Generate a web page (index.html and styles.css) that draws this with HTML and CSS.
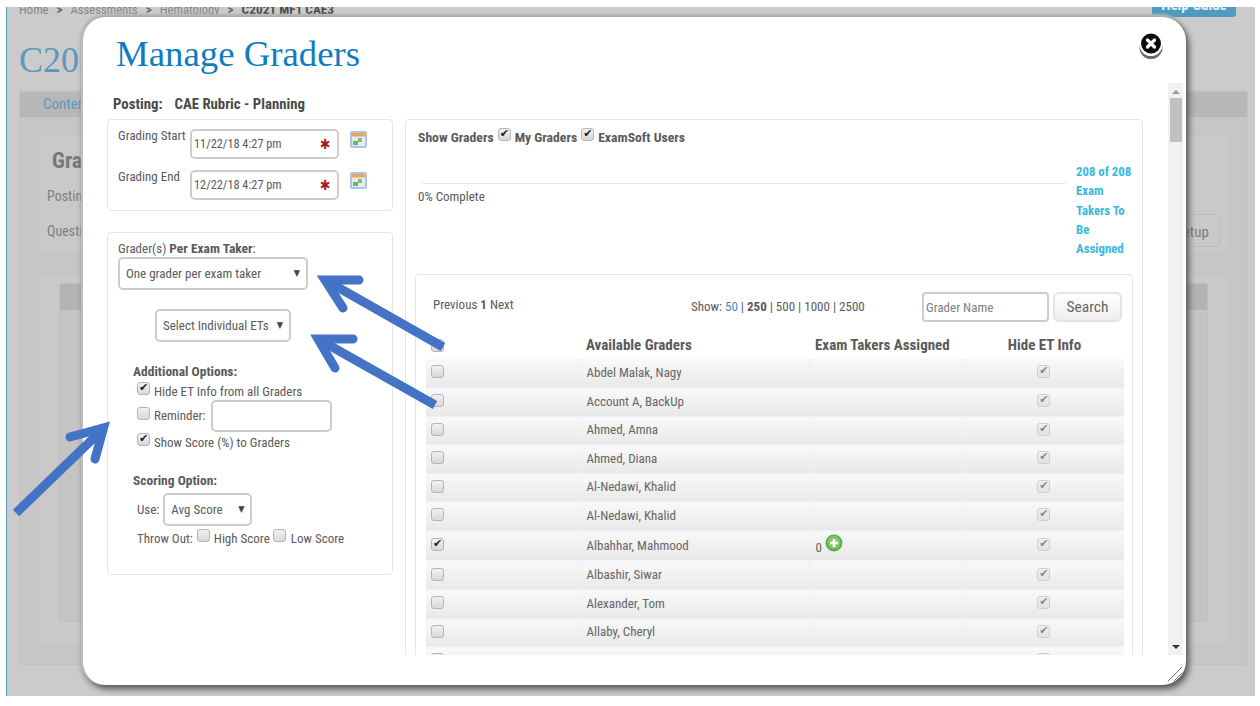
FILE: index.html
```html
<!DOCTYPE html>
<html lang="en">
<head>
<meta charset="utf-8">
<title>Manage Graders</title>
<link rel="stylesheet" href="styles.css">
</head>
<body>
<div class="page">
  <div class="crumbs"><span>Home</span><b class="sep">&gt;</b><span>Assessments</span><b class="sep">&gt;</b><span>Hematology</span><b class="sep">&gt;</b><b>C2021 MF1 CAE3</b><a class="help">Help Guide</a></div>
  <div class="page-title">C2021 MF1 CAE3</div>
  <div class="tabs">
    <div class="tabs-head"><a>Content</a></div>
    <div class="bg-card top">
      <div class="bg-h">Grading</div>
      <div class="bg-line">Posting</div>
      <div class="bg-line q">Questions<span class="bg-btn">Setup</span></div>
    </div>
    <div class="bg-card lower">
      <div class="bg-inner"><div class="bg-strip"></div></div>
    </div>
  </div>
</div>

<div class="modal">
  <h1>Manage Graders</h1>
  <a class="close" aria-label="Close">
    <svg width="28" height="32" viewBox="0 0 28 32"><ellipse cx="14" cy="17.5" rx="11.5" ry="11.5" fill="#444" opacity=".8"/><ellipse cx="14" cy="14.5" rx="11.5" ry="11.5" fill="#fff"/><circle cx="14" cy="13.5" r="10" fill="#0b0b0b"/><path d="M10.5 10l7 7M17.5 10l-7 7" stroke="#fff" stroke-width="3.2" stroke-linecap="round"/></svg>
  </a>
  <div class="scroll-wrap">
    <div class="content">
      <div class="posting"><b>Posting:</b><b>CAE Rubric - Planning</b></div>
      <div class="columns">
        <div class="left">
          <section class="card dates">
            <div class="date-row">
              <label>Grading Start</label>
              <div class="date-input"><span>11/22/18 4:27 pm</span><i class="req">✱</i></div>
              <svg class="cal" width="17" height="17" viewBox="0 0 17 17"><rect x="1" y="1" width="15" height="15" rx="1" fill="#e3edf8" stroke="#a9c6e8" stroke-width="2"/><rect x="2" y="2" width="13" height="3.5" fill="#f2a25c"/><rect x="3" y="10" width="5" height="4" fill="#6fb468"/><rect x="8" y="7" width="4" height="4" fill="#7fc070"/></svg>
            </div>
            <div class="date-row">
              <label>Grading End</label>
              <div class="date-input"><span>12/22/18 4:27 pm</span><i class="req">✱</i></div>
              <svg class="cal" width="17" height="17" viewBox="0 0 17 17"><rect x="1" y="1" width="15" height="15" rx="1" fill="#e3edf8" stroke="#a9c6e8" stroke-width="2"/><rect x="2" y="2" width="13" height="3.5" fill="#f2a25c"/><rect x="3" y="10" width="5" height="4" fill="#6fb468"/><rect x="8" y="7" width="4" height="4" fill="#7fc070"/></svg>
            </div>
          </section>
          <section class="card options">
            <div class="per-label">Grader(s) <b>Per Exam Taker</b>:</div>
            <div class="select s1"><span>One grader per exam taker</span><i>▼</i></div>
            <div class="select s2"><span>Select Individual ETs</span><i>▼</i></div>
            <div class="opt-title">Additional Options:</div>
            <label class="opt o1"><input type="checkbox" checked>Hide ET Info from all Graders</label>
            <label class="opt o2"><input type="checkbox">Reminder:<input type="text" class="reminder"></label>
            <label class="opt o3"><input type="checkbox" checked>Show Score (%) to Graders</label>
            <div class="opt-title scoring">Scoring Option:</div>
            <div class="use">Use:<div class="select s3"><span>Avg Score</span><i>▼</i></div></div>
            <div class="throw">Throw Out:<input type="checkbox"><span>High Score</span><input type="checkbox"><span>Low Score</span></div>
          </section>
        </div>
        <section class="card right">
          <div class="show"><b>Show Graders</b><input type="checkbox" checked><b>My Graders</b><input type="checkbox" checked><b>ExamSoft Users</b></div>
          <div class="progress-row">
            <div class="progress-col">
              <div class="bar"></div>
              <div class="pct">0% Complete</div>
            </div>
            <div class="remaining">208 of 208<br>Exam<br>Takers To<br>Be<br>Assigned</div>
          </div>
          <div class="list-card">
            <div class="toolbar">
              <div class="pager">Previous <b>1</b> Next</div>
              <div class="sizes">Show: <a>50</a> | <b>250</b> | 500 | 1000 | 2500</div>
              <input class="search" type="text" placeholder="Grader Name">
              <button class="search-btn" type="button">Search</button>
            </div>
            <table>
              <thead>
                <tr><th class="c1"><input type="checkbox"></th><th class="c2">Available Graders</th><th class="c3">Exam Takers Assigned</th><th class="c4">Hide ET Info</th></tr>
              </thead>
              <tbody>
                <tr><td><input type="checkbox"></td><td>Abdel Malak, Nagy</td><td></td><td class="h"><input type="checkbox" checked disabled></td></tr>
                <tr><td><input type="checkbox"></td><td>Account A, BackUp</td><td></td><td class="h"><input type="checkbox" checked disabled></td></tr>
                <tr><td><input type="checkbox"></td><td>Ahmed, Amna</td><td></td><td class="h"><input type="checkbox" checked disabled></td></tr>
                <tr><td><input type="checkbox"></td><td>Ahmed, Diana</td><td></td><td class="h"><input type="checkbox" checked disabled></td></tr>
                <tr><td><input type="checkbox"></td><td>Al-Nedawi, Khalid</td><td></td><td class="h"><input type="checkbox" checked disabled></td></tr>
                <tr><td><input type="checkbox"></td><td>Al-Nedawi, Khalid</td><td></td><td class="h"><input type="checkbox" checked disabled></td></tr>
                <tr class="tall"><td><input type="checkbox" checked></td><td>Albahhar, Mahmood</td><td><span class="zero">0</span><svg class="plus" width="18" height="18" viewBox="0 0 18 18"><circle cx="9" cy="9" r="8.5" fill="#5bb04a"/><circle cx="9" cy="8.5" r="6.5" fill="#82c96e"/><path d="M9 5v8M5 9h8" stroke="#fff" stroke-width="2.6"/></svg></td><td class="h"><input type="checkbox" checked disabled></td></tr>
                <tr><td><input type="checkbox"></td><td>Albashir, Siwar</td><td></td><td class="h"><input type="checkbox" checked disabled></td></tr>
                <tr><td><input type="checkbox"></td><td>Alexander, Tom</td><td></td><td class="h"><input type="checkbox" checked disabled></td></tr>
                <tr><td><input type="checkbox"></td><td>Allaby, Cheryl</td><td></td><td class="h"><input type="checkbox" checked disabled></td></tr>
                <tr><td><input type="checkbox"></td><td></td><td></td><td class="h"><input type="checkbox" checked disabled></td></tr>
              </tbody>
            </table>
          </div>
        </section>
      </div>
    </div>
    <div class="scrollbar"><i class="up"></i><div class="thumb"></div><i class="down"></i></div>
  </div>
  <svg class="grip" width="16" height="16" viewBox="0 0 16 16"><path d="M1 15L15 1M7 15L15 7" stroke="#777" stroke-width="1"/></svg>
</div>

<svg class="arrows" width="1260" height="706" viewBox="0 0 1260 706" fill="none" stroke="#4472c4" stroke-width="9">
  <path d="M443 347L325 280"/><path d="M359 280H325L343 308" stroke-linecap="round"/>
  <path d="M435 405L318 339"/><path d="M353 339H318L335 368" stroke-linecap="round"/>
  <path d="M16 513L103 429"/><path d="M70 437L103.5 428L95 459" stroke-linecap="round"/>
</svg>
</body>
</html>
```

FILE: styles.css
```css
* { box-sizing: border-box; }
html, body { margin: 0; height: 706px; overflow: hidden; background: #fff; }
body {
  padding: 7px 5px 10px 6px;
  font-family: Roboto, "Liberation Sans", Arial, sans-serif;
  font-size: 13px;
  font-stretch: 75%;
  line-height: 1.2;
  color: #5a5a5a;
}
b { font-weight: 700; }
i { font-style: normal; }

input[type=checkbox] {
  appearance: none;
  -webkit-appearance: none;
  flex: none;
  width: 13px;
  height: 13px;
  margin: 0;
  border: 1px solid #b5b5b5;
  border-radius: 3px;
  background: linear-gradient(#f2f2f2, #d8d8d8);
  position: relative;
  vertical-align: middle;
}
input[type=checkbox]:checked::after {
  content: "✔";
  position: absolute;
  left: 1px;
  top: -2px;
  font: 11px/14px "DejaVu Sans", sans-serif;
  color: #222;
}
input[type=checkbox]:disabled { border-color: #d0d0d0; background: linear-gradient(#f0f0f0, #e2e2e2); }
input[type=checkbox]:disabled::after { color: #8a8a8a; }

/* dimmed page behind the dialog */
.page {
  height: 689px;
  overflow: hidden;
  background: #cbcbcb;
  border-left: 1px solid #5b9cba;
  padding: 0 7px 0 12px;
  color: #7d7d7d;
}
.crumbs { display: flex; align-items: center; gap: 8px; height: 11px; font-size: 12.6px; color: #868686; white-space: nowrap; margin-top: -3px; position: relative; }
.crumbs b { color: #4b4b4b; font-size: 13.3px; }
.crumbs .sep { color: #6a6a6a; }
.help { margin-left: auto; margin-right: 12px; width: 84px; height: 17px; background: #4d9cc0; color: #dfeef5; font-weight: 700; font-size: 15px; text-align: center; border-radius: 0 0 3px 3px; line-height: 11px; margin-top: -2px; }
.page-title { font: 36px/40px "Liberation Serif", serif; color: #5c98bd; margin-top: 25px; height: 50px; white-space: nowrap; }
.tabs { height: 575px; background: #c6c6c6; border: 1px solid #c2c2c2; border-radius: 3px; padding: 0 18px 18px; display: flex; flex-direction: column; }
.tabs-head { height: 25px; margin: 1px -18px 0; background: #b7b7b7; padding: 3px 23px; color: #5c98bd; font-size: 15px; }
.bg-card { background: #c9c9c9; border: 1px solid #c3c3c3; border-radius: 3px; }
.top { height: 118px; margin-top: 18px; padding: 12px 8px; position: relative; }
.bg-h { font-size: 22px; font-weight: 700; color: #787878; padding-left: 5px; }
.bg-line { margin-top: 14px; font-size: 14px; }
.bg-line.q { margin-top: 18px; }
.bg-btn { position: absolute; right: 8px; top: 78px; width: 60px; height: 33px; border: 1px solid #bdbdbd; border-radius: 4px; text-align: right; padding: 8px 14px; font-size: 15px; }
.lower { flex: 1; margin-top: 22px; padding: 7px 20px 23px 20px; display: flex; }
.bg-inner { flex: 1; background: #c4c4c4; border: 1px solid #bfbfbf; border-radius: 3px; }
.bg-strip { height: 26px; background: #b3b3b3; }

/* dialog */
.modal {
  position: absolute;
  left: 81px;
  top: 17px;
  width: 1105px;
  height: 668px;
  background: #fff;
  border-radius: 24px;
  border-left: 2px solid #bdbdbd;
  box-shadow: 3px 4px 6px #555, 0 -3px 2px #b5b5b5;
  display: flex;
  flex-direction: column;
}
h1 { margin: 0; height: 66px; padding: 17px 0 0 33px; font: 400 36.8px/40px "Liberation Serif", serif; color: #0f7cc0; }
.close { position: absolute; right: 21px; top: 13px; line-height: 0; }
.scroll-wrap { height: 572px; display: flex; margin-right: 2px; overflow: hidden; }
.content { flex: 1; min-width: 0; padding: 0 24px 0 24px; }
.posting { display: flex; gap: 12px; height: 36px; padding: 11px 0 0 6px; font-size: 14.8px; line-height: 20px; color: #4a4a4a; }
.columns { display: flex; gap: 12px; align-items: flex-start; }
.left { width: 286px; flex: none; display: flex; flex-direction: column; gap: 21px; }
.card { background: #fff; border: 1px solid #e6e6e6; border-radius: 4px; }

.dates { height: 92px; padding: 8px 0 0 10px; display: flex; flex-direction: column; gap: 10px; }
.date-row { display: flex; align-items: flex-start; }
.date-row label { width: 72px; flex: none; line-height: 15px; white-space: nowrap; }
.date-input { width: 149px; height: 30px; border: 2px solid #ccc; border-radius: 5px; display: flex; align-items: center; justify-content: space-between; padding: 0 1px 0 2px; margin-top: 1px; font-size: 12.3px; }
.req { color: #a51c24; font-size: 14px; font-family: "DejaVu Sans", sans-serif; width: 16px; }
.cal { margin: 3px 0 0 11px; }

.options { height: 343px; padding: 6px 0 0 10px; }
.per-label { line-height: 16px; height: 18px; padding-top: 1px; }
.per-label b { font-size: 13.5px; }
.select { display: flex; justify-content: space-between; align-items: center; height: 33px; border: 2px solid #ccc; border-radius: 5px; background: #fff; white-space: nowrap; }
.select i { font-size: 9px; color: #444; font-family: "DejaVu Sans", sans-serif; }
.s1 { width: 190px; padding: 0 6px 0 6px; }
.s2 { width: 136px; margin: 19px 0 0 37px; padding: 0 6px 0 6px; }
.s3 { width: 89px; padding: 0 6px 0 6px; margin-left: 4px; }
.opt-title { margin: 21px 0 0 15px; font-weight: 700; font-size: 13.5px; line-height: 16px; color: #5a5a5a; }
.opt { display: flex; align-items: center; margin-left: 19px; white-space: nowrap; }
.opt input[type=checkbox] { margin-right: 4px; top: -3px; }
.o1 { height: 16px; margin-top: 5px; }
.o1 input[type=checkbox] { top: -4px; }
.o2 { height: 32px; margin-top: 0; }
.o3 { height: 16px; margin-top: 3px; }
.o3 input[type=checkbox] { top: -4px; }
.reminder { width: 121px; height: 32px; margin-left: 5px; border: 2px solid #ccc; border-radius: 5px; background: #fff; outline: 0; }
.scoring { margin-top: 21px; }
.use { display: flex; align-items: center; margin: 5px 0 0 19px; }
.throw { display: flex; align-items: center; margin: 3px 0 0 19px; height: 20px; white-space: nowrap; }
.throw input[type=checkbox] { margin: -8px 4px 0 4px; }
.throw span + input[type=checkbox] { margin-left: 1px; margin-right: 5px; }
.throw span { margin-right: 2px; }

.right { width: 738px; flex: none; height: 620px; padding: 0 9px; }
.show { display: flex; align-items: center; height: 33px; padding: 2px 0 0 3px; color: #5a5a5a; font-size: 13.7px; }
.show input[type=checkbox] { margin: -6px 4px 0 4px; }
.progress-row { display: flex; height: 121px; }
.progress-col { width: 655px; flex: none; padding-left: 3px; }
.bar { height: 31px; border-bottom: 1px solid #e9e9e9; border-radius: 0 0 8px 8px; }
.pct { margin-top: 4px; line-height: 17px; }
.remaining { width: 58px; margin: 9px 0 0 6px; font-weight: 700; font-size: 12.8px; line-height: 19.35px; color: #36b9e0; white-space: nowrap; }
.list-card { height: 500px; border: 1px solid #e6e6e6; border-radius: 4px; padding: 0 10px; }
.toolbar { display: flex; height: 55px; align-items: flex-start; padding-top: 17px; }
.pager { width: 258px; padding: 5px 0 0 7px; }
.sizes { width: 231px; padding-top: 7px; margin-left: 7px; }
.sizes a { color: #3a8dc4; }
.search { width: 127px; height: 30px; border: 2px solid #ccc; border-radius: 4px; padding: 0 2px; font: inherit; font-stretch: 75%; margin-right: 4px; outline: 0; color: #777; }
.search::placeholder { color: #808080; opacity: 1; }
.search-btn { width: 69px; height: 30px; border: 2px solid #e3e3e3; border-radius: 6px; background: linear-gradient(#fff, #eee); font-family: inherit; font-stretch: 75%; font-size: 15.5px; color: #666; padding: 0; }

table { border-collapse: collapse; table-layout: fixed; width: 698px; }
th { height: 29px; padding: 0 0 0 5px; text-align: left; font-size: 15px; color: #5a5a5a; vertical-align: middle; white-space: nowrap; }
.c1 { width: 155px; }
.c2 { width: 228px; }
.c3 { width: 156px; padding-left: 6px; }
.c4 { width: 159px; text-align: center; padding: 0; }
tbody tr { height: 28.5px; background: linear-gradient(#f9f9f9, #e9e9e9); border-bottom: 1px solid #eeeef8; }
tbody tr.tall { height: 31px; }
td { padding: 0 0 0 5px; border-left: 1px solid #f0f0f4; vertical-align: middle; color: #666; white-space: nowrap; font-size: 13px; }
td:first-child { border-left: 0; }
td.h { text-align: center; padding: 0 2px 0 0; }
td input[type=checkbox] { top: -2px; }
.zero { position: relative; top: 3px; margin-left: 1px; }
.plus { margin-left: 3px; position: relative; top: -3px; vertical-align: middle; }

.scrollbar { width: 15px; flex: none; background: #f1f1f1; position: relative; margin-right: 1px; }
.thumb { position: absolute; left: 2px; right: 1px; top: 15px; height: 44px; background: #c1c1c1; }
.up, .down { position: absolute; left: 4px; width: 0; height: 0; border: 4px solid transparent; }
.up { top: 3px; border-bottom: 4px solid #9a9a9a; }
.down { bottom: 2px; border-top: 4px solid #333; }
.grip { position: absolute; right: 3px; bottom: 3px; }
.arrows { position: absolute; left: 0; top: 0; pointer-events: none; }
```
